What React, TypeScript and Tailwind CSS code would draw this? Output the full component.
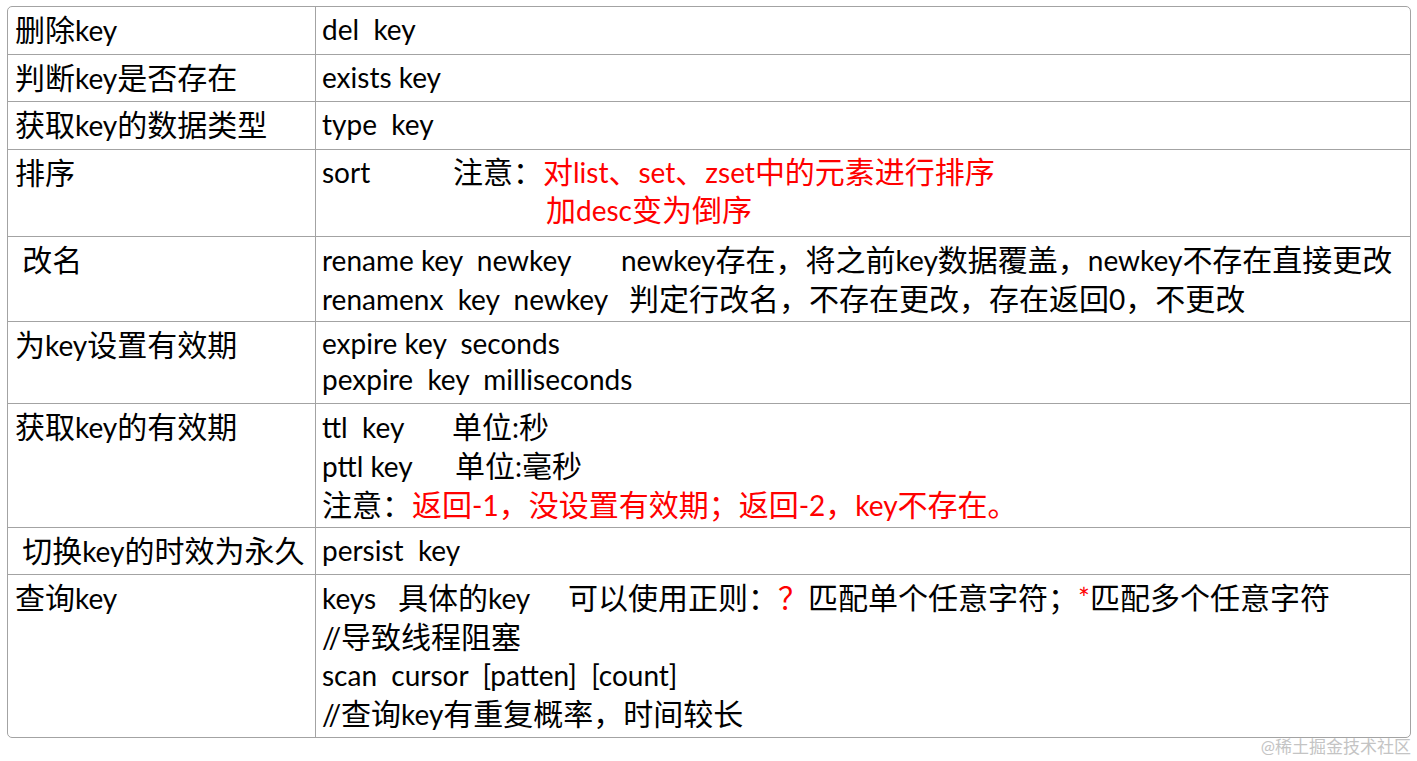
import type { ReactNode } from "react";

// redis key commands cheat sheet

type Row = {
  h: string;
  lead?: string;
  name: string;
  body: ReactNode;
};

// CJK glyphs in the source sit a bit wider than the latin text
function t(s: string): ReactNode[] {
  return s.split(/([\u3000-\u303f\u4e00-\u9fff\uff00-\uffef]+)/).map((part, i) =>
    i % 2 === 1 ? (
      <span key={i} className="text-[30px]">
        {part}
      </span>
    ) : (
      part
    )
  );
}

const Red = ({ children }: { children: string }) => (
  <span className="text-[#ff0000]">{t(children)}</span>
);

const rows: Row[] = [
  { h: "h-[47px]", name: "删除key", body: <div>del  key</div> },
  { h: "h-[47px]", name: "判断key是否存在", body: <div>exists key</div> },
  { h: "h-[48px]", name: "获取key的数据类型", body: <div>type  key</div> },
  {
    h: "h-[87px]",
    lead: "leading-[37px]",
    name: "排序",
    body: (
      <>
        <div>
          <span className="inline-block w-[131px]">sort</span>
          {t("注意：")}
          <Red>对list、set、zset中的元素进行排序</Red>
        </div>
        <div className="pl-[224px]">
          <Red>加desc变为倒序</Red>
        </div>
      </>
    ),
  },
  {
    h: "h-[85px]",
    name: " 改名",
    body: (
      <>
        <div>
          <span className="inline-block w-[299px]">rename key  newkey</span>
          {t("newkey存在，将之前key数据覆盖，newkey不存在直接更改")}
        </div>
        <div>
          <span className="inline-block w-[307px]">renamenx  key  newkey</span>
          {t("判定行改名，不存在更改，存在返回0，不更改")}
        </div>
      </>
    ),
  },
  {
    h: "h-[82px]",
    lead: "leading-[36px]",
    name: "为key设置有效期",
    body: (
      <>
        <div>expire key  seconds</div>
        <div>pexpire  key  milliseconds</div>
      </>
    ),
  },
  {
    h: "h-[124px]",
    name: "获取key的有效期",
    body: (
      <>
        <div>
          <span className="inline-block w-[130px]">ttl  key</span>
          {t("单位:秒")}
        </div>
        <div>
          <span className="inline-block w-[133px]">pttl key</span>
          {t("单位:毫秒")}
        </div>
        <div>
          {t("注意：")}
          <Red>返回-1，没设置有效期；返回-2，key不存在。</Red>
        </div>
      </>
    ),
  },
  { h: "h-[47px]", name: " 切换key的时效为永久", body: <div>persist  key</div> },
  {
    h: "h-[163px]",
    name: "查询key",
    body: (
      <>
        <div>
          <span className="inline-block w-[76px]">keys</span>
          <span className="inline-block w-[170px]">{t("具体的key")}</span>
          {t("可以使用正则：")}
          <Red>？</Red>
          {t("匹配单个任意字符；")}
          <Red>*</Red>
          {t("匹配多个任意字符")}
        </div>
        <div>{t("//导致线程阻塞")}</div>
        <div>scan  cursor  [patten]  [count]</div>
        <div>{t("//查询key有重复概率，时间较长")}</div>
      </>
    ),
  },
];

export default function App() {
  return (
    <div
      className="h-[761px] w-[1417px] overflow-hidden bg-white pl-[7px] pt-[6px] text-black"
      style={{ fontFamily: "Lato, 'Noto Sans CJK SC', sans-serif" }}
    >
      <div className="w-[1404px] overflow-hidden rounded-[5px] border border-[#a3a3a3] text-[28px]">
        {rows.map((r, i) => (
          <div
            key={i}
            className={`flex ${r.h} ${i > 0 ? "border-t border-[#a3a3a3]" : ""}`}
          >
            <div className="w-[308px] shrink-0 whitespace-pre border-r border-[#a3a3a3] pl-[7px] pt-[3px] leading-[38px]">
              {t(r.name)}
            </div>
            <div
              className={`flex-1 whitespace-pre pl-[6px] pt-[3px] ${r.lead ?? "leading-[38px]"}`}
            >
              {r.body}
            </div>
          </div>
        ))}
      </div>
      <div className="flex justify-end pr-[6px] text-[17px] leading-[18px] text-[#c4c4c4]">
        @稀土掘金技术社区
      </div>
    </div>
  );
}
